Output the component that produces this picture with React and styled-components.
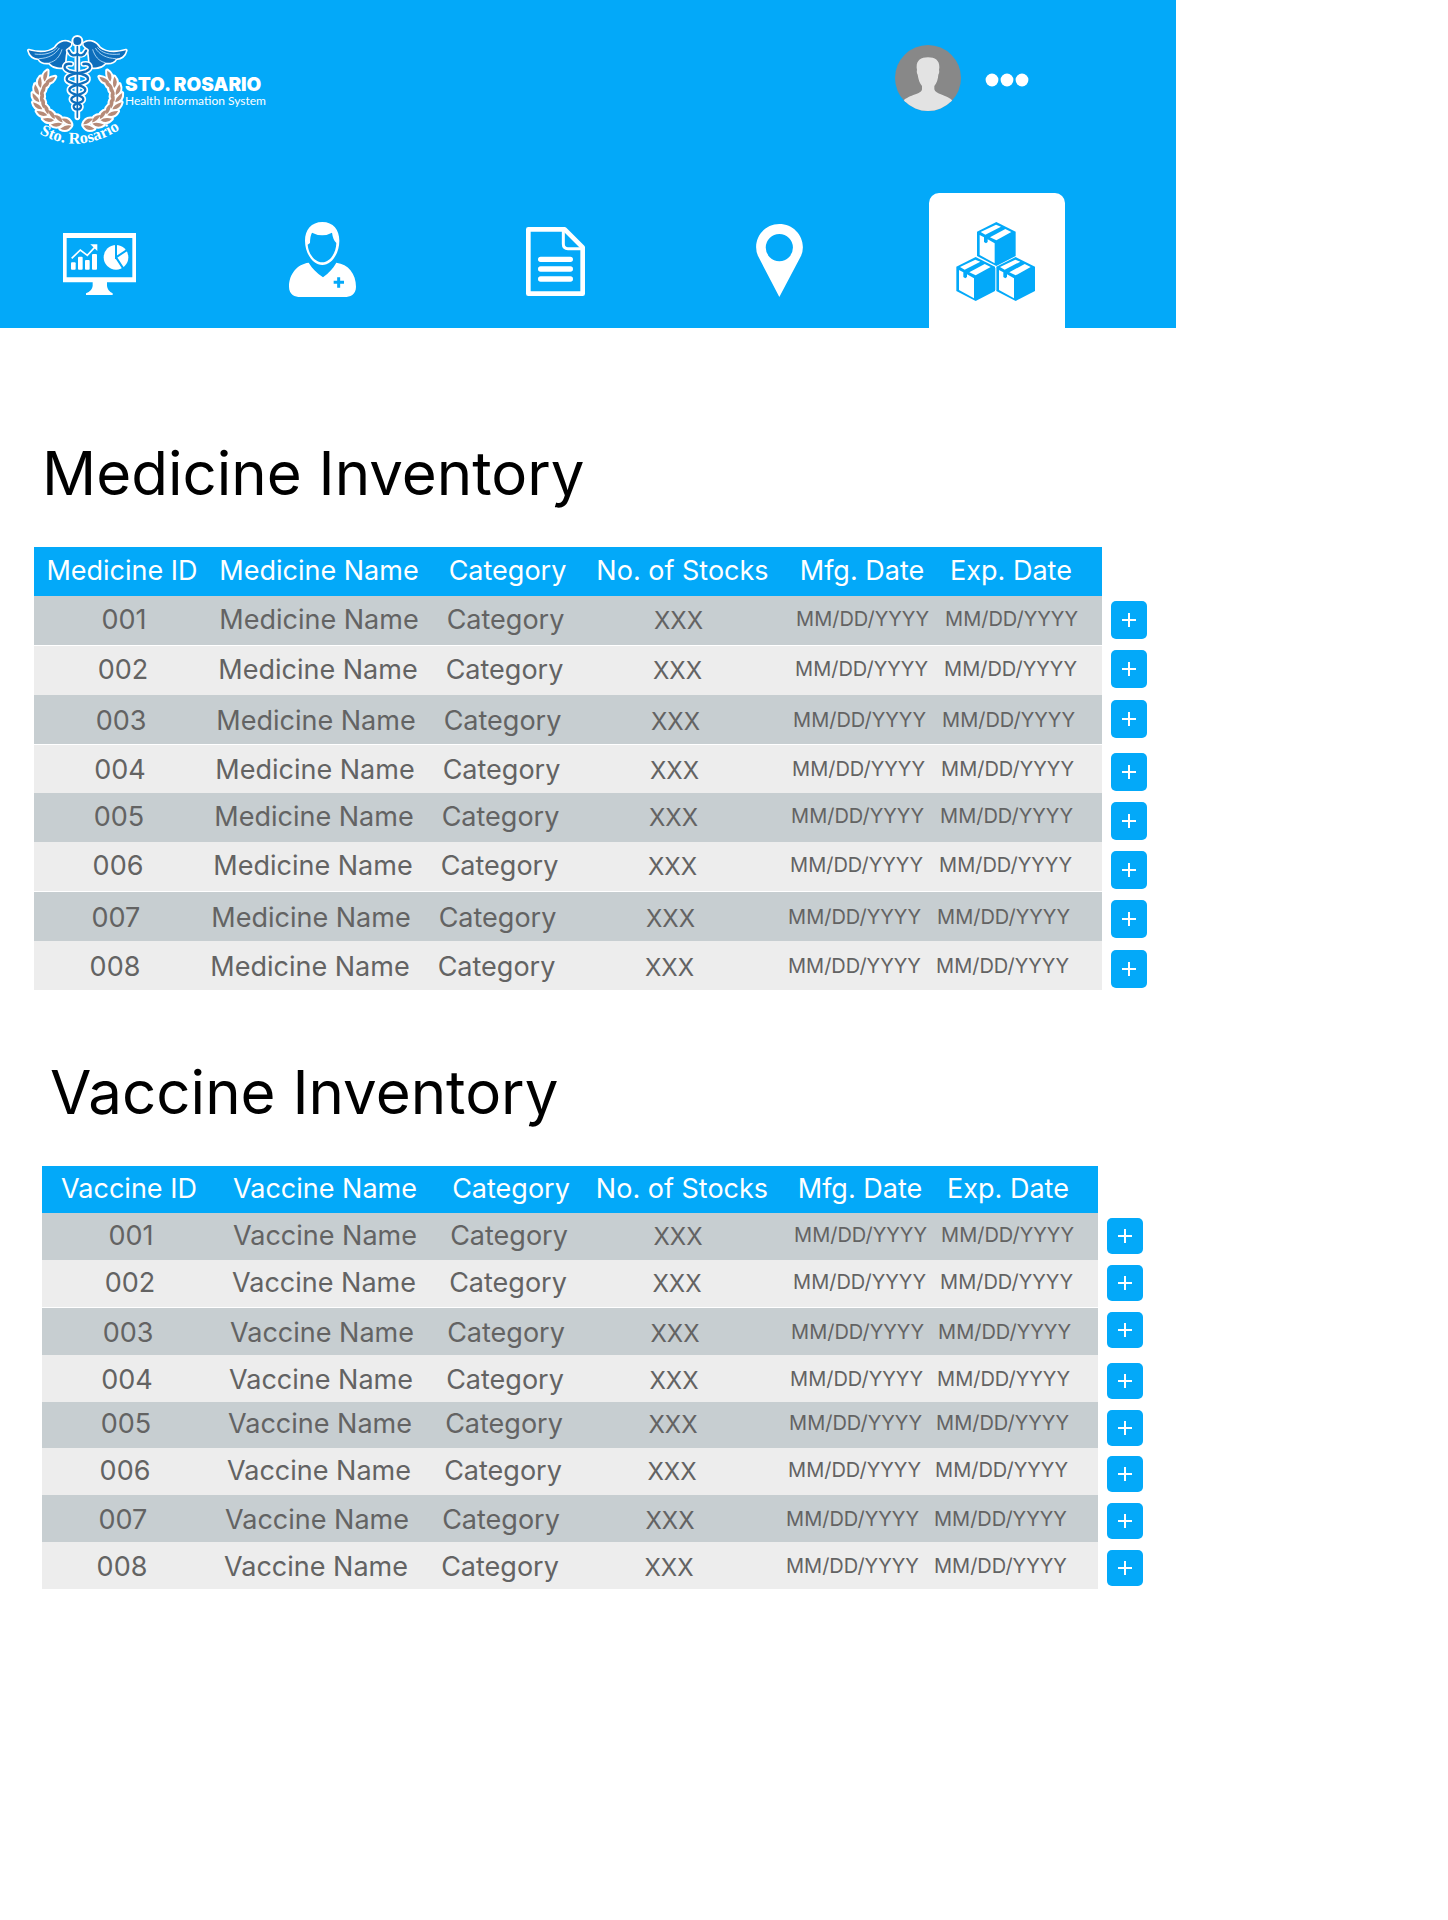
import React from "react";
import styled, { createGlobalStyle } from "styled-components";

const BLUE = "#03a9f9";

const GlobalStyle = createGlobalStyle`
  *, *::before, *::after { box-sizing: border-box; }
  body {
    margin: 0;
    background: #fff;
    font-family: Inter, "Open Sans", "Liberation Sans", sans-serif;
  }
`;

const Page = styled.div`
  width: 100%;
  max-width: 1176px;
`;

const Header = styled.header`
  background: ${BLUE};
  color: #fff;
`;

const TopBar = styled.div`
  display: flex;
  justify-content: space-between;
  align-items: flex-start;
  padding: 35px 146px 0 27px;
  min-height: 193px;
`;

const Brand = styled.a`
  display: flex;
  align-items: center;
  color: #fff;
  text-decoration: none;
`;

const BrandName = styled.span`
  display: block;
  padding-top: 2px;
  font-size: 19px;
  line-height: 18px;
  font-weight: 900;
`;

const BrandTagline = styled.span`
  display: block;
  font-family: Lato, "Open Sans", sans-serif;
  font-size: 12px;
  line-height: 14px;
`;

const Account = styled.div`
  display: flex;
  align-items: center;
  gap: 24px;
  padding-top: 10px;
`;

const IconButton = styled.button`
  display: flex;
  padding: 0;
  border: 0;
  background: none;
  color: inherit;
  cursor: pointer;
`;

const AvatarDrawing = styled.svg`
  display: block;
  border-radius: 50%;
`;

const Logo = styled.svg`
  display: block;
  overflow: visible;
`;

const Nav = styled.nav`
  display: grid;
  grid-template-columns: 224fr 233fr 224fr 218fr 136fr;
  padding: 0 111px 0 31px;
`;

const NavLink = styled.a`
  display: flex;
  align-items: center;
  justify-content: center;
  width: 136px;
  height: 135px;
  border-radius: 10px 10px 0 0;
  background: ${(p) => (p.$active ? "#fff" : "transparent")};
  color: ${(p) => (p.$active ? BLUE : "#fff")};
`;

const Inventory = styled.section`
  padding: ${(p) => p.$padding};
`;

const Title = styled.h1`
  margin: 0 0 34px;
  padding-left: 8px;
  font-size: 60px;
  line-height: 80px;
  font-weight: 400;
  color: #000;
`;

const Table = styled.table`
  width: 100%;
  table-layout: fixed;
  border-collapse: separate;
  border-spacing: 0;
  font-size: 27px;
  line-height: 32px;
  color: #636363;
`;

const HeadCell = styled.th`
  height: ${(p) => p.$height}px;
  padding: 0 ${(p) => p.$inset || 0}px 2px 0;
  background: ${BLUE};
  color: #fff;
  font-weight: 400;
  text-align: center;
  white-space: nowrap;
`;

const Cell = styled.td`
  height: ${(p) => p.$height}px;
  padding: ${(p) => (p.$low ? 4 : 0)}px ${(p) => p.$inset || 0}px 2px ${(p) => p.$lead || 0}px;
  border-top: ${(p) => (p.$ruled ? "1px solid #fff" : "0")};
  background: ${(p) => (p.$dark ? "#c7ced1" : "#ededed")};
  text-align: center;
  white-space: nowrap;
`;

const StockCell = styled(Cell)`
  font-size: 24px;
  padding-bottom: 0;
`;

const DateCell = styled(Cell)`
  font-size: 20px;
  line-height: 28px;
  padding-bottom: 4px;
  text-align: right;
`;

const ActionCell = styled.td`
  padding: ${(p) => p.$top}px 0 0 9px;
  vertical-align: top;
`;

const ActionBox = styled.div`
  height: 0;
`;

const AddButton = styled.button`
  display: flex;
  align-items: center;
  justify-content: center;
  width: 36px;
  height: ${(p) => p.$height}px;
  padding: 0;
  border: 0;
  border-radius: 5px;
  background: ${BLUE};
  color: #fff;
  cursor: pointer;
`;

const LEAF_ANGLES = [99, 113, 127, 141, 155, 169, 183, 197, 211];

function Laurel() {
  return LEAF_ANGLES.map((deg) => {
    const a = (deg * Math.PI) / 180;
    const x = 232 + 114 * Math.cos(a);
    const y = 290 + 86 * Math.sin(a);
    const dir = (Math.atan2(86 * Math.cos(a), -114 * Math.sin(a)) * 180) / Math.PI;
    return (
      <g key={deg} transform={`translate(${x} ${y}) rotate(${dir})`}>
        <path d="M0 2 Q14 -1 32 15 Q10 23 0 2Z" />
        <path d="M0 -2 Q14 1 32 -15 Q10 -23 0 -2Z" />
      </g>
    );
  });
}

function Wing() {
  return (
    <g>
      <path
        d="M213 130 C196 118 176 126 166 143 C148 158 118 160 86 151 C90 168 102 175 116 176 C122 187 134 190 148 188 C156 199 174 204 192 202 C198 184 194 160 203 146 C207 138 214 141 213 130Z"
        fill="#0d6ebc"
        stroke="#fff"
        strokeWidth="10"
        strokeLinejoin="round"
        paintOrder="stroke"
      />
      <path
        d="M104 162 C134 166 158 160 172 142 M116 176 C144 175 166 164 178 144 M148 188 C168 184 180 168 186 148"
        fill="none"
        stroke="#bfe3fb"
        strokeWidth="2.5"
      />
    </g>
  );
}

const SNAKE =
  "M214 192 C192 188 186 206 206 214 C228 222 266 220 264 238 C262 254 207 252 208 270 C209 287 251 282 250 298 C249 311 220 308 221 320 Q222 328 229 328";

function LogoDrawing() {
  return (
    <Logo width="98" height="111" viewBox="81 105 294 333" aria-hidden="true">
      <defs>
        <path id="seal-arc" d="M106 394 Q236 474 372 380" />
      </defs>
      <g fill="#fff" stroke="#fff" strokeWidth="12" strokeLinejoin="round">
        <Laurel />
        <g transform="translate(464 0) scale(-1 1)">
          <Laurel />
        </g>
      </g>
      <g fill="#b58a78">
        <Laurel />
        <g transform="translate(464 0) scale(-1 1)">
          <Laurel />
        </g>
      </g>
      <Wing />
      <g transform="translate(464 0) scale(-1 1)">
        <Wing />
      </g>
      <g fill="none" stroke="#fff" strokeLinecap="round" strokeWidth="17">
        <path d={SNAKE} />
        <path d={SNAKE} transform="translate(464 0) scale(-1 1)" />
        <path d="M232 130 V352" />
        <path d="M206 152 Q216 172 232 160 Q248 172 258 152" />
      </g>
      <circle cx="232" cy="123" r="18" fill="#fff" />
      <g fill="none" stroke="#0d6ebc" strokeLinecap="round" strokeWidth="7">
        <path d={SNAKE} />
        <path d={SNAKE} transform="translate(464 0) scale(-1 1)" />
        <path d="M206 152 Q216 174 232 162 Q248 174 258 152" />
        <path d="M232 140 V352" strokeWidth="5" />
      </g>
      <circle cx="232" cy="123" r="12" fill="#0d6ebc" />
      <text
        fill="#fff"
        fontFamily='"Liberation Serif", serif'
        fontWeight="700"
        fontSize="49"
      >
        <textPath href="#seal-arc" startOffset="50%" textAnchor="middle">
          Sto. Rosario
        </textPath>
      </text>
    </Logo>
  );
}

function Avatar() {
  return (
    <AvatarDrawing width="66" height="66" viewBox="105 75 198 198" aria-hidden="true">
      <rect x="105" y="75" width="198" height="198" fill="#888" />
      <path
        fill="#e3e3e3"
        d="M204 112 C226 112 239 122 238 143 L237 150 Q239 158 235 164 C234 178 230 190 223 198 V208 C226 224 258 222 280 244 V280 H128 V244 C150 222 184 224 186 208 V198 C179 190 175 178 173 164 Q169 158 171 150 L170 143 C169 122 182 112 204 112Z"
      />
    </AvatarDrawing>
  );
}

function Dots() {
  return (
    <svg width="45" height="18" viewBox="0 0 45 18" fill="currentColor" aria-hidden="true">
      <circle cx="7" cy="11" r="6.4" />
      <circle cx="22" cy="11" r="6.4" />
      <circle cx="37" cy="11" r="6.4" />
    </svg>
  );
}

function MonitorIcon() {
  return (
    <svg width="73" height="68" viewBox="69 81 219 204" fill="currentColor" aria-hidden="true">
      <path fillRule="evenodd" d="M69 99 H288 V247 H69Z M80 114 V232 H277 V114Z" />
      <path d="M158 246 H201 V258 Q203 274 218 280 V285 H138 V280 Q156 274 158 258Z" />
      <rect x="93" y="187" width="14" height="22" rx="3" />
      <rect x="114" y="170" width="14" height="39" rx="3" />
      <rect x="135" y="180" width="14" height="29" rx="3" />
      <rect x="156" y="162" width="15" height="47" rx="3" />
      <path d="M95 175 L121 150 L142 166 L166 140" fill="none" stroke="currentColor" strokeWidth="5" />
      <path d="M151 133 H172 V153Z" />
      <circle cx="228" cy="172" r="37" />
      <path d="M228 133 V172 L264 148 M228 172 L250 206" fill="none" stroke={BLUE} strokeWidth="6" />
    </svg>
  );
}

function DoctorIcon() {
  return (
    <svg width="67" height="77" viewBox="747 66 201 231" fill="currentColor" aria-hidden="true">
      <path
        fillRule="evenodd"
        d="M847 66 C880 66 898 90 898 122 C898 162 874 195 847 195 C820 195 795 162 795 122 C795 90 814 66 847 66Z M816 98 Q847 114 876 98 Q879 120 889 129 C888 162 868 187 847 187 C826 187 806 165 803 134 L810 129 Q810 108 816 98Z"
      />
      <path d="M806 188 Q820 212 849 232 Q876 212 889 188 C925 192 948 222 948 260 C948 284 930 291 914 291 H781 C765 291 747 284 747 260 C747 222 772 192 806 188Z" />
      <path d="M896 232 V263 M881 247 H912" stroke={BLUE} strokeWidth="9" />
    </svg>
  );
}

function DocumentIcon() {
  return (
    <svg width="59" height="71" viewBox="78 75 177 213" fill="none" stroke="currentColor" aria-hidden="true">
      <path d="M85 88 H194 L248 142 V281 H85Z" strokeWidth="14" strokeLinejoin="round" />
      <path d="M190 88 V132 Q190 146 204 146 H249" strokeWidth="9" />
      <path d="M122 178 H211 M122 207 H211 M122 237 H211" strokeWidth="16" strokeLinecap="round" />
    </svg>
  );
}

function PinIcon() {
  return (
    <svg width="47" height="73" viewBox="768 71 141 220" fill="currentColor" aria-hidden="true">
      <path
        fillRule="evenodd"
        d="M838 71 C878 71 909 103 909 141 Q909 156 902 170 L838 291 L775 170 Q768 156 768 141 C768 103 799 71 838 71Z M838 101 A41 41 0 1 0 838 183 A41 41 0 1 0 838 101Z"
      />
    </svg>
  );
}

function Crate({ x, y }) {
  return (
    <g transform={`translate(${x} ${y})`}>
      <path d="M59 0 L117 29 V102 L59 132 L1 102 V29Z" fill={BLUE} />
      <g fill="#fff">
        <path d="M9 39 L22 46 V60 L28 64 L33 60 V52 L54 64 V124 L9 99Z" />
        <path d="M12 30 L58 8 L73 14 L26 38Z" />
        <path d="M40 46 L86 21 L104 30 L59 55Z" />
      </g>
    </g>
  );
}

function CratesIcon() {
  return (
    <svg width="82" height="79" viewBox="168 123 246 237" overflow="visible" aria-hidden="true">
      <Crate x={230} y={126} />
      <Crate x={168} y={231} />
      <Crate x={288} y={231} />
      <path d="M287 264 V330" stroke="#9fdcfb" strokeWidth="3" />
    </svg>
  );
}

function PlusIcon() {
  return (
    <svg width="16" height="16" viewBox="0 0 16 16" fill="none" stroke="currentColor" strokeWidth="2" aria-hidden="true">
      <path d="M8 1 V15 M1 8 H15" />
    </svg>
  );
}

const NAV_ITEMS = [
  { label: "Dashboard", Icon: MonitorIcon },
  { label: "Doctors", Icon: DoctorIcon },
  { label: "Records", Icon: DocumentIcon },
  { label: "Locations", Icon: PinIcon },
  { label: "Inventory", Icon: CratesIcon, active: true },
];

const IDS = ["001", "002", "003", "004", "005", "006", "007", "008"];
const LOW_ROWS = [2, 3, 6, 7];
const DATE = "MM/DD/YYYY";

const MEDICINE = {
  kind: "Medicine",
  padding: "105px 29px 0 34px",
  columns: [176, 218, 159, 201, 148, 166, 45],
  headHeight: 49,
  rowHeights: [49, 50, 49, 49, 49, 49, 50, 49],
  ruled: [1, 3, 6],
  buttonHeight: 38,
  buttonTop: 9,
};

const VACCINE = {
  kind: "Vaccine",
  padding: "62px 33px 0 42px",
  columns: [174, 218, 154, 198, 148, 164, 45],
  headHeight: 47,
  rowHeights: [47, 47, 48, 47, 46, 47, 47, 47],
  ruled: [2],
  buttonHeight: 36,
  buttonTop: 8,
};

const HEAD_INSETS = [0, 0, 0, 10, 0, 16];

function InventoryTable({ config }) {
  const { kind, columns, headHeight, rowHeights, ruled } = config;
  const headings = [`${kind} ID`, `${kind} Name`, "Category", "No. of Stocks", "Mfg. Date", "Exp. Date"];
  return (
    <Inventory $padding={config.padding}>
      <Title>{kind} Inventory</Title>
      <Table aria-label={`${kind} Inventory`}>
        <colgroup>
          {columns.map((width, i) => (
            <col key={i} style={{ width }} />
          ))}
        </colgroup>
        <thead>
          <tr>
            {headings.map((text, i) => (
              <HeadCell key={text} scope="col" $height={headHeight} $inset={HEAD_INSETS[i]}>
                {text}
              </HeadCell>
            ))}
            <td />
          </tr>
        </thead>
        <tbody>
          {IDS.map((id, i) => {
            // Each row leans a little further left than the one above it.
            const lean = Math.round(i * 1.25);
            const row = {
              $height: rowHeights[i],
              $dark: i % 2 === 0,
              $ruled: ruled.includes(i),
              $low: LOW_ROWS.includes(i),
            };
            return (
              <tr key={id}>
                <Cell {...row} $inset={lean * 2} $lead={4}>{id}</Cell>
                <Cell {...row} $inset={lean * 2}>{kind} Name</Cell>
                <Cell {...row} $inset={lean * 2 + 4}>Category</Cell>
                <StockCell {...row} $inset={lean * 2 + 18}>XXX</StockCell>
                <DateCell {...row} $inset={lean + 7}>{DATE}</DateCell>
                <DateCell {...row} $inset={lean + 24}>{DATE}</DateCell>
                <ActionCell $top={i < 3 ? 5 : config.buttonTop}>
                  <ActionBox>
                    <AddButton type="button" $height={config.buttonHeight} aria-label={`Add to ${kind} ${id}`}>
                      <PlusIcon />
                    </AddButton>
                  </ActionBox>
                </ActionCell>
              </tr>
            );
          })}
        </tbody>
      </Table>
    </Inventory>
  );
}

export default function App() {
  return (
    <>
      <GlobalStyle />
      <Page>
        <Header>
          <TopBar>
            <Brand href="#home">
              <LogoDrawing />
              <span>
                <BrandName>STO. ROSARIO</BrandName>
                <BrandTagline>Health Information System</BrandTagline>
              </span>
            </Brand>
            <Account>
              <IconButton type="button" aria-label="Profile">
                <Avatar />
              </IconButton>
              <IconButton type="button" aria-label="More options">
                <Dots />
              </IconButton>
            </Account>
          </TopBar>
          <Nav aria-label="Main">
            {NAV_ITEMS.map(({ label, Icon, active }) => (
              <NavLink key={label} href={`#${label.toLowerCase()}`} aria-label={label} $active={active}>
                <Icon />
              </NavLink>
            ))}
          </Nav>
        </Header>
        <main>
          <InventoryTable config={MEDICINE} />
          <InventoryTable config={VACCINE} />
        </main>
      </Page>
    </>
  );
}
